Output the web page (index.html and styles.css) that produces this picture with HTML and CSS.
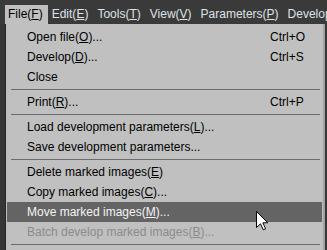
FILE: index.html
```html
<!DOCTYPE html>
<html lang="en">
<head>
    <meta charset="UTF-8">
    <title>File menu</title>
    <link rel="stylesheet" href="styles.css">
</head>
<body>
    <div class="menubar">
        <div class="menubar-item active">File(<u>F</u>)</div>
        <div class="menubar-item">Edit(<u>E</u>)</div>
        <div class="menubar-item">Tools(<u>T</u>)</div>
        <div class="menubar-item">View(<u>V</u>)</div>
        <div class="menubar-item">Parameters(<u>P</u>)</div>
        <div class="menubar-item">Develop</div>
    </div>

    <div class="dropdown">
        <div class="menu-item"><span>Open file(<u>O</u>)...</span><span class="shortcut">Ctrl+O</span></div>
        <div class="menu-item"><span>Develop(<u>D</u>)...</span><span class="shortcut">Ctrl+S</span></div>
        <div class="menu-item"><span>Close</span></div>
        <div class="separator"></div>
        <div class="menu-item"><span>Print(<u>R</u>)...</span><span class="shortcut">Ctrl+P</span></div>
        <div class="separator"></div>
        <div class="menu-item"><span>Load development parameters(<u>L</u>)...</span></div>
        <div class="menu-item"><span>Save development parameters...</span></div>
        <div class="separator"></div>
        <div class="menu-item"><span>Delete marked images(<u>E</u>)</span></div>
        <div class="menu-item"><span>Copy marked images(<u>C</u>)...</span></div>
        <div class="menu-item selected"><span>Move marked images(<u>M</u>)...</span></div>
        <div class="menu-item disabled"><span>Batch develop marked images(<u>B</u>)...</span></div>
        <div class="separator"></div>
    </div>

    <!-- mouse pointer over the selected item -->
    <svg class="cursor" width="13" height="20" viewBox="0 0 13 20">
        <path d="M0.5 0.5 L0.5 16.5 L4.5 12.8 L7.3 18.8 L9.6 17.8 L6.9 11.8 L11.8 11.8 Z" fill="#fff" stroke="#000" stroke-width="1"/>
    </svg>
</body>
</html>
```

FILE: styles.css
```css
* {
    margin: 0;
    padding: 0;
    box-sizing: border-box;
}

body {
    font-family: "Liberation Sans", Arial, sans-serif;
    font-size: 12px;
    background: #363636;
    width: 327px;
    height: 250px;
    overflow: hidden;
    position: relative;
}

u {
    text-decoration: underline;
    text-underline-offset: 1px;
}

.menubar {
    display: flex;
    height: 24px;
    padding: 5px 0 0 5px;
    background: #3a3a3a;
    white-space: nowrap;
}

.menubar-item {
    height: 19px;
    line-height: 18px;
    padding: 0 5px 0 3px;
    margin-right: 1px;
    color: #dfe2e8;
}

.menubar-item.active {
    background: #c0c0c0;
    color: #000;
}

.dropdown {
    margin-left: 5px;
    width: 320px;
    padding: 3px 1px 0 1px;
    background: #c0c0c0;
    border-left: 1px solid #262626;
    border-right: 2px solid #a2a2a2;
    height: 226px;
}

.menu-item {
    display: flex;
    align-items: center;
    height: 20px;
    padding-left: 20px;
    color: #000;
    white-space: nowrap;
}

.menu-item .shortcut {
    margin-left: auto;
    width: 52px;
}

.menu-item.selected {
    background: #646464;
    color: #f4f4f4;
}

.menu-item.disabled {
    color: #8b8b8b;
}

.separator {
    height: 5px;
    padding: 2px 2px 0 4px;
}

.separator::after {
    content: "";
    display: block;
    height: 1px;
    background: #6c6c6c;
}

.cursor {
    position: absolute;
    left: 256px;
    top: 211px;
}
```
